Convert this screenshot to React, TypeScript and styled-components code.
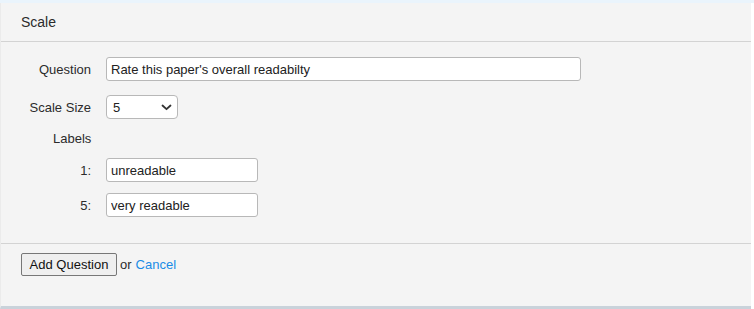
import React from "react";
import styled, { createGlobalStyle } from "styled-components";

const Global = createGlobalStyle`
  html, body { margin: 0; padding: 0; background: #ffffff; }
  body { font-family: "Liberation Sans", Arial, sans-serif; font-size: 13px; color: #222; }
`;

const TopStrip = styled.div`
  height: 3px;
  background: #eaf4fc;
`;

const Panel = styled.div`
  width: 751px;
  background: #f4f4f4;
  border-left: 1px solid #ebebeb;
  border-bottom: 3px solid #c9d2da;
  box-sizing: border-box;
  height: 306px;
  display: flex;
  flex-direction: column;
`;

const Header = styled.div`
  height: 38px;
  padding-left: 20px;
  display: flex;
  align-items: center;
  font-size: 14px;
  color: #2b2b2b;
  border-bottom: 1px solid #d3d3d3;
`;

const Body = styled.div`
  padding: 15px 0 26px 0;
  display: flex;
  flex-direction: column;
  border-bottom: 1px solid #d3d3d3;
`;

const Row = styled.div<{ $mb: number }>`
  display: flex;
  align-items: center;
  gap: 15px;
  margin-bottom: ${(p) => p.$mb}px;
`;

const Label = styled.label`
  width: 90px;
  text-align: right;
  color: #2b2b2b;
  font-size: 13px;
`;

const SectionLabel = styled.div`
  padding-left: 52px;
  height: 16px;
  line-height: 16px;
  color: #2b2b2b;
  margin-bottom: 11px;
`;

const TextInput = styled.input<{ $w: number }>`
  width: ${(p) => p.$w}px;
  height: 24px;
  box-sizing: border-box;
  border: 1px solid #b8b8b8;
  border-radius: 3px;
  background: #fff;
  padding: 0 4px;
  font-family: "Liberation Sans", Arial, sans-serif;
  font-size: 13px;
  color: #222;
  outline: none;
`;

const SelectWrap = styled.div`
  position: relative;
  width: 72px;
  height: 24px;
`;

const Select = styled.select`
  appearance: none;
  -webkit-appearance: none;
  width: 72px;
  height: 24px;
  box-sizing: border-box;
  border: 1px solid #b8b8b8;
  border-radius: 4px;
  background: #fff;
  padding: 0 0 0 6px;
  font-family: "Liberation Sans", Arial, sans-serif;
  font-size: 13px;
  color: #222;
  outline: none;
`;

const Chevron = styled.svg`
  position: absolute;
  right: 6px;
  top: 9px;
  pointer-events: none;
`;

const Footer = styled.div`
  padding: 9px 0 0 20px;
  display: flex;
  align-items: center;
  gap: 4px;
  color: #2b2b2b;
`;

const Button = styled.button`
  height: 23px;
  width: 96px;
  box-sizing: border-box;
  border: 1px solid #777;
  border-radius: 2px;
  background: #efefef;
  font-family: "Liberation Sans", Arial, sans-serif;
  font-size: 13px;
  color: #111;
  padding: 0;
`;

const Or = styled.span`
  margin-left: -1px;
`;

const Link = styled.a`
  color: #1a8ce6;
  text-decoration: none;
  cursor: pointer;
`;

export default function App() {
  return (
    <>
      <Global />
      <TopStrip />
      <Panel>
        <Header>Scale</Header>
        <Body>
          <Row $mb={14}>
            <Label>Question</Label>
            <TextInput $w={475} defaultValue="Rate this paper's overall readabilty" />
          </Row>
          <Row $mb={12}>
            <Label>Scale Size</Label>
            <SelectWrap>
              <Select defaultValue="5">
                <option>2</option>
                <option>3</option>
                <option>4</option>
                <option>5</option>
                <option>6</option>
                <option>7</option>
              </Select>
              <Chevron width="11" height="7" viewBox="0 0 11 7">
                <path d="M1.5 1.5 L5.5 5.2 L9.5 1.5" fill="none" stroke="#333" strokeWidth="1.8" strokeLinecap="round" strokeLinejoin="round" />
              </Chevron>
            </SelectWrap>
          </Row>
          <SectionLabel>Labels</SectionLabel>
          <Row $mb={11}>
            <Label>1:</Label>
            <TextInput $w={152} defaultValue="unreadable" />
          </Row>
          <Row $mb={0}>
            <Label>5:</Label>
            <TextInput $w={152} defaultValue="very readable" />
          </Row>
        </Body>
        <Footer>
          <Button>Add Question</Button>
          <Or>or</Or>
          <Link>Cancel</Link>
        </Footer>
      </Panel>
    </>
  );
}
